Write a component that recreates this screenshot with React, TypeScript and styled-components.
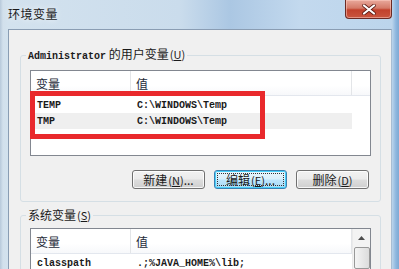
import React from "react";
import styled, { createGlobalStyle, css } from "styled-components";

const GlobalStyle = createGlobalStyle`
  html, body {
    margin: 0;
    padding: 0;
    width: 399px;
    height: 269px;
    overflow: hidden;
    background: #c9dbec;
  }
  * { box-sizing: border-box; }
`;

const CJK = `"Noto Sans CJK SC", "Noto Sans", sans-serif`;
const MONO = `"Liberation Mono", "DejaVu Sans Mono", monospace`;

const Window = styled.div`
  width: 399px;
  height: 269px;
  overflow: hidden;
  display: flex;
  flex-direction: column;
  background: linear-gradient(90deg, #b7c9da 0px, #d2e0ec 3px, #d3e2ee 8px, #cadcec 180px, #abc7e3 230px, #c3d9ee 300px, #bcd5ec 392px, #8db6de 396px, #7fa9d3 399px);
`;

const TitleBar = styled.div`
  height: 29px;
  flex: none;
  display: flex;
  align-items: flex-start;
  justify-content: space-between;
  padding: 0 7px 0 8px;
`;

const Title = styled.div`
  margin-top: 6px;
  font-family: ${CJK};
  font-size: 12px;
  line-height: 15px;
  letter-spacing: 0.5px;
  color: #1a1a1a;
  text-shadow: 0 0 6px rgba(255, 255, 255, 0.9);
`;

const CloseButton = styled.div`
  width: 47px;
  height: 19px;
  border: 1px solid #6b2a24;
  border-top: none;
  border-radius: 0 0 4px 4px;
  background: linear-gradient(180deg, #e9a99c 0%, #d47a68 45%, #c2412c 55%, #c9553f 100%);
  box-shadow: inset 0 0 0 1px rgba(255, 210, 200, 0.5);
  display: flex;
  align-items: center;
  justify-content: center;
`;

const Client = styled.div`
  flex: 1;
  margin: 0 7px 0 8px;
  background: #f0f0f0;
  border-top: 1px solid #8a9db3;
  border-left: 1px solid #8a9db3;
  border-right: 1px solid #a8bdd3;
  padding-top: 17px;
`;

const GroupBox = styled.fieldset<{ $gap?: number }>`
  margin: ${(p) => p.$gap ?? 0}px 10px 0 11px;
  padding: 0;
  min-width: 0;
  border: 1px solid #d5dfe5;
  border-radius: 3px;
`;

const Legend = styled.legend`
  margin-left: 5px;
  padding: 0 2px;
  font-family: ${CJK};
  font-size: 12px;
  line-height: 14px;
  color: #1a1a1a;
  white-space: nowrap;
`;

const MonoText = styled.span`
  font-family: ${MONO};
  font-size: 10px;
  font-weight: bold;
`;

const Mnemonic = styled.span`
  font-size: 11px;
  margin-left: 1px;
  u { text-decoration: underline; }
`;

const GroupBody = styled.div<{ $top: number }>`
  padding: ${(p) => p.$top}px 9px 12px 9px;
`;

const List = styled.div<{ $height: number }>`
  position: relative;
  height: ${(p) => p.$height}px;
  border: 1px solid #828790;
  background: #fff;
  display: flex;
`;

const ListArea = styled.div`
  flex: 1;
  min-width: 0;
`;

const HeaderRow = styled.div`
  display: flex;
  height: 25px;
  border-bottom: 1px solid #e3e7ee;
  background: linear-gradient(180deg, #ffffff 0%, #ffffff 60%, #f7f8fa 100%);
`;

const HeaderCell = styled.div<{ $w: number }>`
  width: ${(p) => p.$w}px;
  flex: none;
  padding-left: 5px;
  border-right: 1px solid #e3e5e8;
  display: flex;
  align-items: center;
  font-family: ${CJK};
  font-size: 12px;
  color: #1e2b3a;
`;

const Rows = styled.div`
  padding-top: 1px;
`;

const Row = styled.div<{ $alt?: boolean }>`
  display: flex;
  height: 16px;
  width: 321px;
  align-items: center;
  ${(p) =>
    p.$alt &&
    css`
      background: #efefef;
    `}
`;

const Cell = styled.div<{ $w: number }>`
  width: ${(p) => p.$w}px;
  flex: none;
  padding-left: 6px;
  font-family: ${MONO};
  font-size: 10px;
  font-weight: bold;
  color: #1a1a1a;
  white-space: nowrap;
  overflow: hidden;
`;

const Highlight = styled.div`
  position: absolute;
  left: -1px;
  top: 20px;
  width: 235px;
  height: 48px;
  border: 5px solid #e9292c;
  pointer-events: none;
`;

const ScrollBar = styled.div`
  width: 18px;
  flex: none;
  background: #f3f3f3;
  border-left: 1px solid #eaeaea;
  display: flex;
  flex-direction: column;
  align-items: center;
`;

const ScrollArrow = styled.div`
  height: 18px;
  width: 100%;
  display: flex;
  align-items: center;
  justify-content: center;
`;

const ScrollThumb = styled.div`
  width: 16px;
  height: 22px;
  border: 1px solid #989898;
  border-radius: 2px;
  background: linear-gradient(90deg, #f4f4f4 0%, #e8e8e8 50%, #dcdcdc 100%);
`;

const ButtonRow = styled.div`
  display: flex;
  justify-content: flex-end;
  gap: 9px;
  margin-top: 14px;
  padding-right: 2px;
`;

const Button = styled.div<{ $focused?: boolean }>`
  width: 73px;
  height: 19px;
  border: 1px solid #707070;
  border-radius: 3px;
  background: linear-gradient(180deg, #f2f2f2 0%, #ebebeb 48%, #dddddd 52%, #cfcfcf 100%);
  box-shadow: inset 0 0 0 1px rgba(255, 255, 255, 0.8);
  display: flex;
  align-items: center;
  justify-content: center;
  font-family: ${CJK};
  font-size: 12px;
  color: #1a1a1a;
  white-space: nowrap;
  ${(p) =>
    p.$focused &&
    css`
      border-color: #3c7fb1;
      background: linear-gradient(180deg, #eaf6fd 0%, #d9f0fc 48%, #bee6fd 52%, #a7d9f5 100%);
      box-shadow: inset 0 0 0 1px #48d0f9;
      outline: 1px dotted #333;
      outline-offset: -4px;
    `}
`;

const COL1 = 100;
const COL2 = 221;

const Columns = () => (
  <HeaderRow>
    <HeaderCell $w={COL1}>变量</HeaderCell>
    <HeaderCell $w={COL2}>值</HeaderCell>
  </HeaderRow>
);

const userVars = [
  { name: "TEMP", value: "C:\\WINDOWS\\Temp" },
  { name: "TMP", value: "C:\\WINDOWS\\Temp" },
];

export default function App() {
  return (
    <>
      <GlobalStyle />
      <Window>
        <TitleBar>
          <Title>环境变量</Title>
          <CloseButton>
            <svg width="14" height="11" viewBox="0 0 14 11">
              <path d="M2 1.5 L12 9.5 M12 1.5 L2 9.5" stroke="#5a1a12" strokeWidth="3.6" strokeLinecap="round" />
              <path d="M2 1.5 L12 9.5 M12 1.5 L2 9.5" stroke="#ffffff" strokeWidth="2.2" strokeLinecap="round" />
            </svg>
          </CloseButton>
        </TitleBar>
        <Client>
          <GroupBox>
            <Legend>
              <MonoText>Administrator</MonoText> 的用户变量<Mnemonic>(<u>U</u>)</Mnemonic>
            </Legend>
            <GroupBody $top={6}>
              <List $height={86}>
                <ListArea>
                  <Columns />
                  <Rows>
                    {userVars.map((v, i) => (
                      <Row key={v.name} $alt={i % 2 === 1}>
                        <Cell $w={COL1}>{v.name}</Cell>
                        <Cell $w={COL2}>{v.value}</Cell>
                      </Row>
                    ))}
                  </Rows>
                </ListArea>
                <Highlight />
              </List>
              <ButtonRow>
                <Button>新建<Mnemonic>(<u>N</u>)</Mnemonic>...</Button>
                <Button $focused>编辑<Mnemonic>(<u>E</u>)</Mnemonic>...</Button>
                <Button>删除<Mnemonic>(<u>D</u>)</Mnemonic></Button>
              </ButtonRow>
            </GroupBody>
          </GroupBox>
          <GroupBox $gap={6}>
            <Legend>
              系统变量<Mnemonic>(<u>S</u>)</Mnemonic>
            </Legend>
            <GroupBody $top={6}>
              <List $height={90}>
                <ListArea>
                  <Columns />
                  <Rows>
                    <Row>
                      <Cell $w={COL1}>classpath</Cell>
                      <Cell $w={COL2}>.;%JAVA_HOME%\lib;</Cell>
                    </Row>
                  </Rows>
                </ListArea>
                <ScrollBar>
                  <ScrollArrow>
                    <svg width="7" height="4" viewBox="0 0 7 4">
                      <path d="M0 4 L3.5 0 L7 4 Z" fill="#4d4d4d" />
                    </svg>
                  </ScrollArrow>
                  <ScrollThumb />
                </ScrollBar>
              </List>
            </GroupBody>
          </GroupBox>
        </Client>
      </Window>
    </>
  );
}
